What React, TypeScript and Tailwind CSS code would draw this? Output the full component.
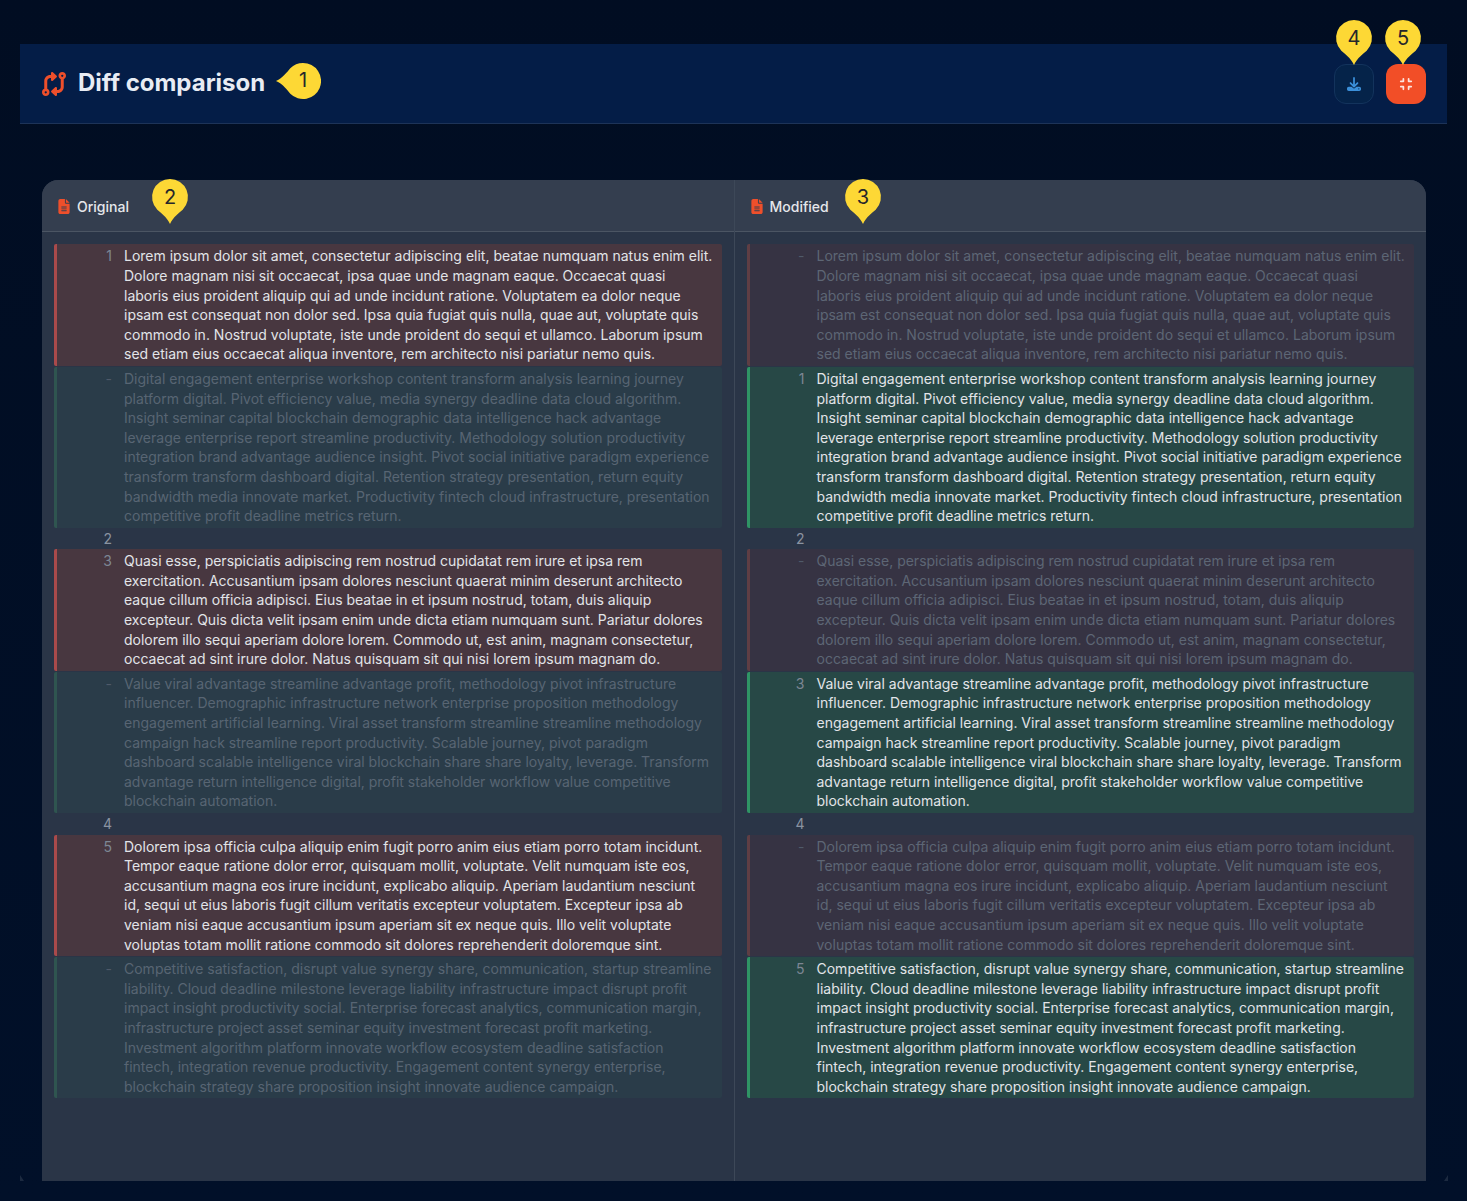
import { FaCodeCompare, FaCompress, FaDownload, FaFileLines } from "react-icons/fa6";

const blocks = [
  {
    removed:
      "Lorem ipsum dolor sit amet, consectetur adipiscing elit, beatae numquam natus enim elit. Dolore magnam nisi sit occaecat, ipsa quae unde magnam eaque. Occaecat quasi laboris eius proident aliquip qui ad unde incidunt ratione. Voluptatem ea dolor neque ipsam est consequat non dolor sed. Ipsa quia fugiat quis nulla, quae aut, voluptate quis commodo in. Nostrud voluptate, iste unde proident do sequi et ullamco. Laborum ipsum sed etiam eius occaecat aliqua inventore, rem architecto nisi pariatur nemo quis.",
    added:
      "Digital engagement enterprise workshop content transform analysis learning journey platform digital. Pivot efficiency value, media synergy deadline data cloud algorithm. Insight seminar capital blockchain demographic data intelligence hack advantage leverage enterprise report streamline productivity. Methodology solution productivity integration brand advantage audience insight. Pivot social initiative paradigm experience transform transform dashboard digital. Retention strategy presentation, return equity bandwidth media innovate market. Productivity fintech cloud infrastructure, presentation competitive profit deadline metrics return.",
    oldNo: "1",
    newNo: "1",
    spacer: "2",
  },
  {
    removed:
      "Quasi esse, perspiciatis adipiscing rem nostrud cupidatat rem irure et ipsa rem exercitation. Accusantium ipsam dolores nesciunt quaerat minim deserunt architecto eaque cillum officia adipisci. Eius beatae in et ipsum nostrud, totam, duis aliquip excepteur. Quis dicta velit ipsam enim unde dicta etiam numquam sunt. Pariatur dolores dolorem illo sequi aperiam dolore lorem. Commodo ut, est anim, magnam consectetur, occaecat ad sint irure dolor. Natus quisquam sit qui nisi lorem ipsum magnam do.",
    added:
      "Value viral advantage streamline advantage profit, methodology pivot infrastructure influencer. Demographic infrastructure network enterprise proposition methodology engagement artificial learning. Viral asset transform streamline streamline methodology campaign hack streamline report productivity. Scalable journey, pivot paradigm dashboard scalable intelligence viral blockchain share share loyalty, leverage. Transform advantage return intelligence digital, profit stakeholder workflow value competitive blockchain automation.",
    oldNo: "3",
    newNo: "3",
    spacer: "4",
  },
  {
    removed:
      "Dolorem ipsa officia culpa aliquip enim fugit porro anim eius etiam porro totam incidunt. Tempor eaque ratione dolor error, quisquam mollit, voluptate. Velit numquam iste eos, accusantium magna eos irure incidunt, explicabo aliquip. Aperiam laudantium nesciunt id, sequi ut eius laboris fugit cillum veritatis excepteur voluptatem. Excepteur ipsa ab veniam nisi eaque accusantium ipsum aperiam sit ex neque quis. Illo velit voluptate voluptas totam mollit ratione commodo sit dolores reprehenderit doloremque sint.",
    added:
      "Competitive satisfaction, disrupt value synergy share, communication, startup streamline liability. Cloud deadline milestone leverage liability infrastructure impact disrupt profit impact insight productivity social. Enterprise forecast analytics, communication margin, infrastructure project asset seminar equity investment forecast profit marketing. Investment algorithm platform innovate workflow ecosystem deadline satisfaction fintech, integration revenue productivity. Engagement content synergy enterprise, blockchain strategy share proposition insight innovate audience campaign.",
    oldNo: "5",
    newNo: "5",
    spacer: "",
  },
];

const Row = ({ no, text, kind }: { no: string; text: string; kind: "red" | "green" | "redDim" | "greenDim" }) => {
  const styles = {
    red: "bg-[#483740] border-[#a94a4b] text-[#e2e4e8]",
    green: "bg-[#274846] border-[#2f9465] text-[#e2e4e8]",
    redDim: "bg-[#363343] border-[#5f3e44] text-[#5d6675]",
    greenDim: "bg-[#2a3c49] border-[#2f5550] text-[#586573]",
  };
  const numColor = kind === "red" || kind === "green" ? "text-[#7d8694]" : "text-[#4f5a69]";

  return (
    <div className={`flex rounded-[2px] border-l-[3px] py-0.5 mb-px ${styles[kind]}`}>
      <div className={`w-[55px] shrink-0 text-right ${numColor}`}>{no}</div>
      <div className="ml-3 w-[589px] flex-none">{text}</div>
    </div>
  );
};

const Column = ({ title, side }: { title: string; side: "old" | "new" }) => (
  <div className={`flex flex-col ${side === "old" ? "border-r border-[#3d4858]" : ""}`}>
    <div className="flex h-[52px] items-center gap-1.5 border-b border-[#4b5563] bg-[#343e4f] pl-[15px] pt-0.5 text-[14px] font-medium text-[#e5e7eb]">
      <FaFileLines className="h-[15px] w-[14px] text-[#ee4f2b]" />
      {title}
    </div>
    <div className="px-3 pb-3 pt-[12.4px] text-[14px] leading-[19.6px]">
      {blocks.map((b) => (
        <div key={b.oldNo}>
          {side === "old" ? (
            <>
              <Row no={b.oldNo} text={b.removed} kind="red" />
              <Row no="-" text={b.added} kind="greenDim" />
            </>
          ) : (
            <>
              <Row no="-" text={b.removed} kind="redDim" />
              <Row no={b.newNo} text={b.added} kind="green" />
            </>
          )}
          {b.spacer && (
            <div className="mb-px flex border-l-[3px] border-transparent">
              <div className="w-[55px] shrink-0 text-right text-[#8a93a1]">{b.spacer}</div>
            </div>
          )}
        </div>
      ))}
    </div>
  </div>
);

// yellow callout markers that sit on top of the screenshot
const Pin = ({ n, className, left }: { n: number; className: string; left?: boolean }) => (
  <div className={`absolute h-[46px] w-[46px] ${className}`}>
    <svg viewBox="0 0 46 46" className="absolute inset-0 h-full w-full">
      {left ? (
        <path d="M28 5a18 18 0 1 1 -12.7 30.7 C13 33 8 26 1 23 C8 20 12 14 15.3 10.3 A18 18 0 0 1 28 5z" fill="#fdd835" />
      ) : (
        <path d="M23 1a18 18 0 0 1 12.7 30.7 C33 34 26 39 23 46 C20 39 13 34 10.3 31.7 A18 18 0 0 1 23 1z" fill="#fdd835" />
      )}
    </svg>
    <span
      className={`absolute flex h-9 w-9 items-center justify-center text-[20px] text-[#26262b] ${left ? "left-[10px] top-[4px]" : "left-[5px] top-px"}`}
    >
      {n}
    </span>
  </div>
);

export default function App() {
  return (
    <div
      className="relative h-[1201px] overflow-hidden bg-gradient-to-b from-[#010d22] to-[#011029] px-5 pt-11"
      style={{ fontFamily: "Inter, 'Liberation Sans', sans-serif" }}
    >
      <header className="flex h-20 items-center justify-between border-b border-[#1d3358] bg-[#041d47] pl-[22px] pr-[21px]">
        <div className="flex items-center gap-3">
          <FaCodeCompare className="h-6 w-6 text-[#ee4f2b]" />
          <h1 className="-mt-0.5 text-[24px] font-bold text-[#e8ecf4]">Diff comparison</h1>
        </div>
        <div className="flex items-center gap-3">
          <button className="flex h-10 w-10 items-center justify-center rounded-xl border border-[#13335c] bg-[#052349] text-[#3b8fd9]">
            <FaDownload className="h-[14px] w-[14px]" />
          </button>
          <button className="flex h-10 w-10 items-center justify-center rounded-xl bg-[#f24e27] text-[#fde5df]">
            <FaCompress className="h-[14px] w-[14px]" />
          </button>
        </div>
      </header>

      <main className="pl-[22px] pr-[21px] pt-14">
        <div className="grid h-[1001px] grid-cols-[692.5px_1fr] overflow-hidden rounded-t-2xl bg-[#2a3547]">
          <Column title="Original" side="old" />
          <Column title="Modified" side="new" />
        </div>
      </main>

      <Pin n={1} left className="left-[275px] top-[58px]" />
      <Pin n={2} className="left-[147px] top-[178px]" />
      <Pin n={3} className="left-[840px] top-[178px]" />
      <Pin n={4} className="left-[1331px] top-[19px]" />
      <Pin n={5} className="left-[1380px] top-[19px]" />

      {/* tiny corner marks at the bottom of the frame */}
      <svg viewBox="0 0 6 6" className="absolute left-[20px] top-[1175px] h-[6px] w-[6px]">
        <path d="M0 0 L4 6 L0 6z" fill="#1c2a40" />
      </svg>
      <svg viewBox="0 0 6 6" className="absolute left-[1443px] top-[1175px] h-[6px] w-[6px]">
        <path d="M5 0 L1 6 L5 6z" fill="#1c2a40" />
      </svg>
    </div>
  );
}
